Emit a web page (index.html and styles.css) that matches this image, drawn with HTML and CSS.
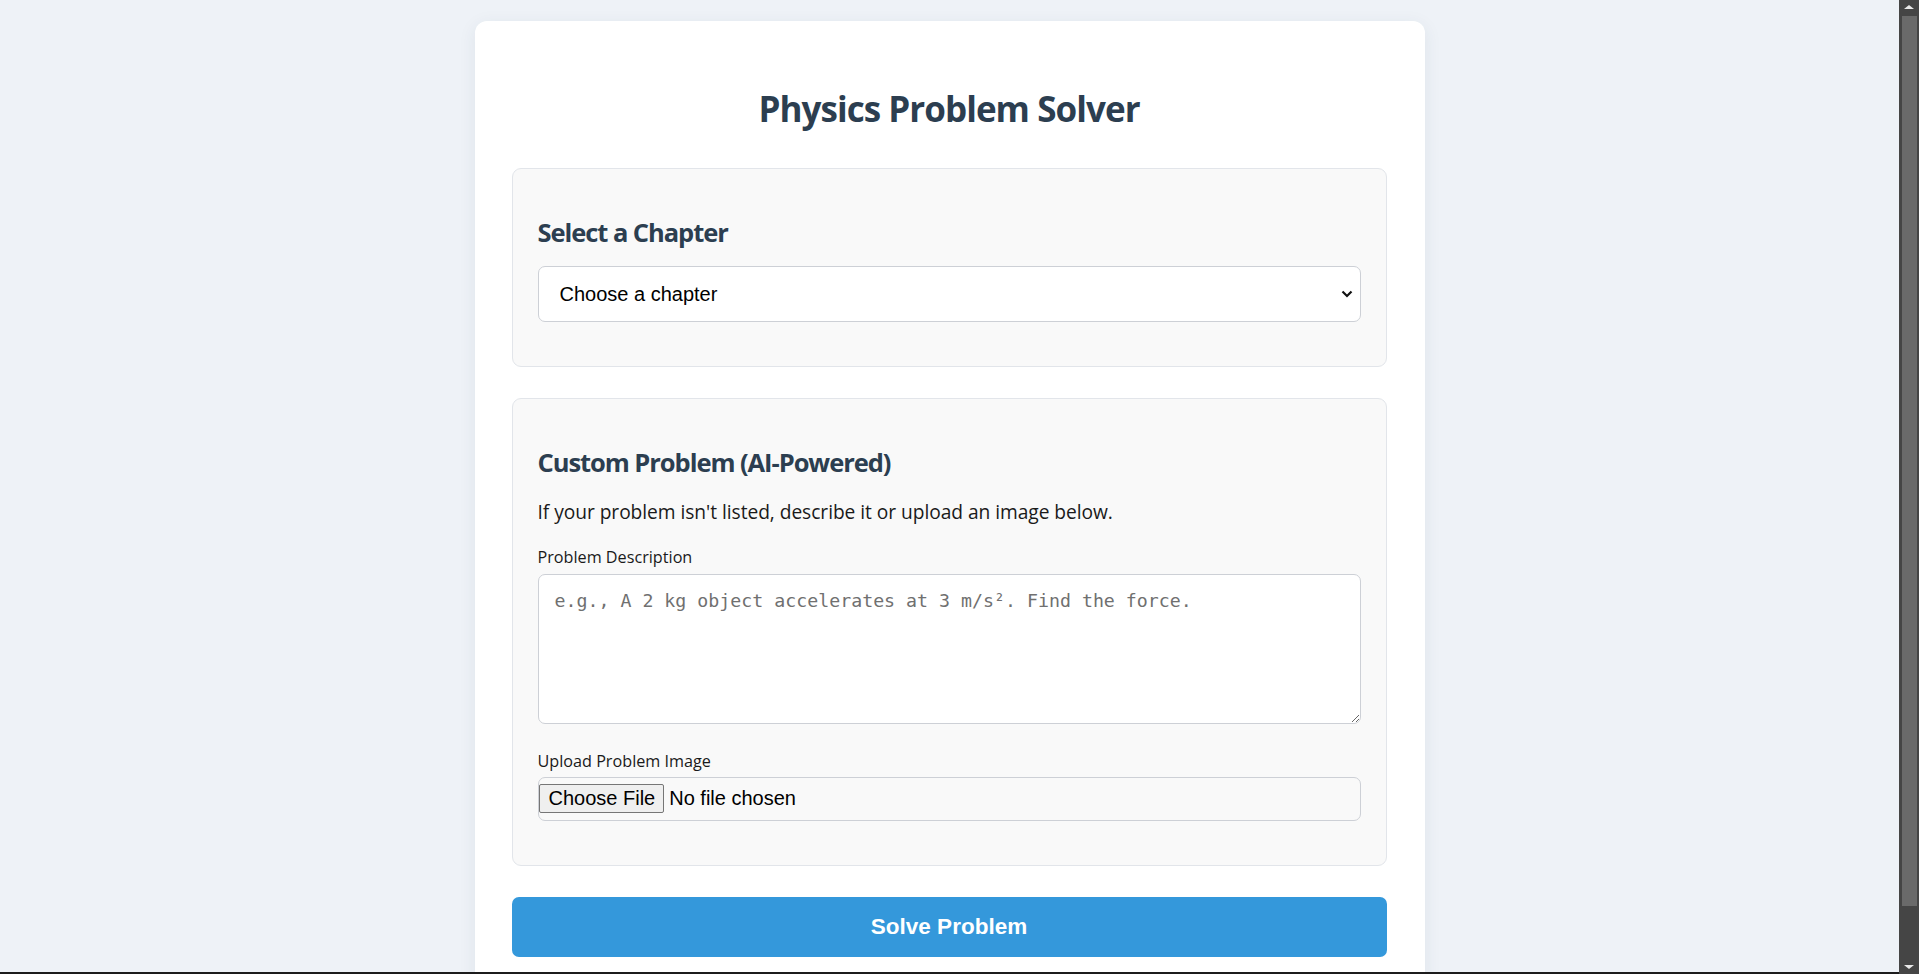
FILE: index.html
```html
<!DOCTYPE html>
<html lang="en">
<head>
<meta charset="UTF-8">
<title>Physics Problem Solver</title>
<link rel="stylesheet" href="styles.css">
</head>
<body>
<div class="card">
  <h1 class="title">Physics Problem Solver</h1>

  <section class="panel">
    <h2 class="panel-title">Select a Chapter</h2>
    <div class="select-wrap">
      <select class="select">
        <option>Choose a chapter</option>
      </select>
      <svg class="chevron" width="12" height="8" viewBox="0 0 12 8"><path d="M1.5 1.5 L6 6 L10.5 1.5" fill="none" stroke="#111" stroke-width="2.2"/></svg>
    </div>
  </section>

  <section class="panel">
    <h2 class="panel-title">Custom Problem (AI-Powered)</h2>
    <p class="intro">If your problem isn't listed, describe it or upload an image below.</p>
    <label class="field-label" for="desc">Problem Description</label>
    <textarea id="desc" class="textarea" placeholder="e.g., A 2 kg object accelerates at 3 m/s². Find the force."></textarea>
    <label class="field-label upload-label" for="file">Upload Problem Image</label>
    <input id="file" class="file" type="file">
  </section>

  <button class="solve">Solve Problem</button>
</div>

<div class="scrollbar" aria-hidden="true">
  <span class="sb-arrow sb-up"></span>
  <span class="sb-thumb"></span>
  <span class="sb-arrow sb-down"></span>
</div>
<div class="bottom-edge" aria-hidden="true"></div>
</body>
</html>
```

FILE: styles.css
```css
html {
  background: #eef2f7;
}
body {
  margin: 0;
  padding: 21px 20px 38px 0;
  background: #eef2f7;
  font-family: "Open Sans", "Noto Sans", sans-serif;
  color: #1f1f1f;
}
.scrollbar {
  position: fixed;
  top: 0;
  right: 0;
  width: 20px;
  height: 100vh;
  background: #454545;
  display: flex;
  flex-direction: column;
  align-items: center;
}
.sb-thumb {
  display: block;
  width: 15px;
  margin: 1px 0 0 1px;
  flex: 0 0 890px;
  background: #6a6a6a;
}
.sb-arrow {
  display: block;
  width: 0;
  height: 0;
  border-left: 5px solid transparent;
  border-right: 5px solid transparent;
}
.sb-up {
  margin: 5px 0 6px;
  border-bottom: 4px solid #e8e8e8;
}
.sb-down {
  margin-top: auto;
  margin-bottom: 5px;
  border-top: 4px solid #e8e8e8;
}
.bottom-edge {
  position: fixed;
  left: 0;
  right: 20px;
  bottom: 0;
  height: 2px;
  background: #1c1c1c;
}
.card {
  box-sizing: border-box;
  width: 950px;
  margin: 0 auto;
  padding: 37px 38px 37px 37px;
  background: #ffffff;
  border-radius: 12px;
  box-shadow: 0 4px 18px rgba(40, 60, 90, 0.08);
}
.title {
  margin: 29px 0 37px;
  font-size: 35px;
  line-height: 44px;
  font-weight: 700;
  text-align: center;
  color: #2c3e50;
  letter-spacing: -0.95px;
}
.panel {
  display: flex;
  flex-direction: column;
  margin-bottom: 31px;
  padding: 25px 25px 24px;
  background: #f9f9f9;
  border: 1px solid #e2e5ea;
  border-radius: 9px;
}
.panel-title {
  margin: 22px 0 18px;
  font-size: 25.5px;
  line-height: 32px;
  font-weight: 700;
  color: #2c3e50;
  letter-spacing: -1.05px;
}
.select-wrap {
  position: relative;
  margin-bottom: 20px;
}
.select {
  -webkit-appearance: none;
  appearance: none;
  box-sizing: border-box;
  display: block;
  width: 100%;
  height: 56px;
  padding: 0 21px;
  font-family: "Liberation Sans", Arial, sans-serif;
  font-size: 20px;
  color: #000;
  background: #fff;
  border: 1px solid #cdd0d6;
  border-radius: 7px;
}
.chevron {
  position: absolute;
  right: 8px;
  top: 24px;
}
.intro {
  margin: 2px 0 20px;
  font-size: 19.2px;
  line-height: 28px;
  color: #1a1a1a;
  letter-spacing: -0.05px;
}
.field-label {
  display: block;
  margin-bottom: 6px;
  font-size: 16.2px;
  line-height: 22px;
  color: #1a1a1a;
  letter-spacing: 0;
}
.textarea {
  box-sizing: border-box;
  display: block;
  width: 100%;
  height: 150px;
  margin: 0 0 26px;
  padding: 13px 16px 12px;
  font-family: "DejaVu Sans Mono", "Liberation Mono", monospace;
  font-size: 18.25px;
  line-height: 26px;
  background: #fff;
  border: 1px solid #cdd0d6;
  border-radius: 7px;
  resize: vertical;
}
.textarea::placeholder {
  color: #707070;
}
.upload-label {
  margin-bottom: 5px;
}
.file {
  box-sizing: border-box;
  display: block;
  width: 100%;
  height: 44px;
  margin-bottom: 20px;
  padding: 6px 0 6px 0;
  font-family: "Liberation Sans", Arial, sans-serif;
  font-size: 20px;
  color: #000;
  background: #f9f9f9;
  border: 1px solid #cdd0d6;
  border-radius: 7px;
}
.file::file-selector-button {
  height: 29px;
  margin: 0 5px 0 0;
  padding: 0 8px 0 9px;
  font-family: "Liberation Sans", Arial, sans-serif;
  font-size: 20px;
  color: #000;
  background: #efefef;
  border: 1px solid #767676;
  border-radius: 2px;
}
.solve {
  display: block;
  width: 100%;
  height: 60px;
  font-family: "Liberation Sans", Arial, sans-serif;
  font-size: 22.5px;
  font-weight: 700;
  color: #fff;
  background: #3498db;
  border: none;
  border-radius: 7px;
}
```
